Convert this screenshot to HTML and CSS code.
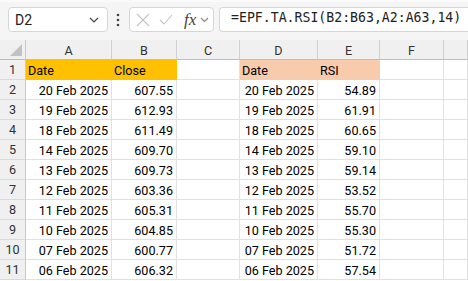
FILE: index.html
```html
<!DOCTYPE html>
<html>
<head>
  <title>RSI</title>
  <link rel="stylesheet" href="styles.css">
</head>
<body>

  <div class="toolbar">
    <div class="namebox">
      <span>D2</span>
      <svg class="chev" width="10" height="6" viewBox="0 0 10 6"><path d="M1 1 L5 5 L9 1" fill="none" stroke="#444" stroke-width="1.2"/></svg>
    </div>
    <svg class="dots" width="4" height="14" viewBox="0 0 4 14"><circle cx="2" cy="2" r="1.3" fill="#444"/><circle cx="2" cy="7" r="1.3" fill="#444"/><circle cx="2" cy="12" r="1.3" fill="#444"/></svg>
    <div class="fxbox">
      <svg width="14" height="14" viewBox="0 0 14 14"><path d="M1 1 L13 13 M13 1 L1 13" stroke="#c4c4c4" stroke-width="1.1"/></svg>
      <svg width="14" height="14" viewBox="0 0 14 14"><path d="M1 7 L5 11 L13 2" fill="none" stroke="#c4c4c4" stroke-width="1.1"/></svg>
      <span class="fx">fx</span>
      <svg width="9" height="6" viewBox="0 0 9 6"><path d="M1 1 L4.5 4.5 L8 1" fill="none" stroke="#888" stroke-width="1.1"/></svg>
    </div>
    <div class="formula">=EPF.TA.RSI(B2:B63,A2:A63,14)</div>
  </div>

  <div class="sheet" id="sheet"></div>

  <script>
    const dates = ["20 Feb 2025","19 Feb 2025","18 Feb 2025","14 Feb 2025","13 Feb 2025",
                   "12 Feb 2025","11 Feb 2025","10 Feb 2025","07 Feb 2025","06 Feb 2025"];
    const close = ["607.55","612.93","611.49","609.70","609.73","603.36","605.31","604.85","600.77","606.32"];
    const rsi = ["54.89","61.91","60.65","59.10","59.14","53.52","55.70","55.30","51.72","57.54"];

    const sheet = document.getElementById("sheet");
    let html = '<div class="corner"><span class="tri"></span></div>';
    ["A","B","C","D","E","F",""].forEach(c => { html += `<div class="colhead">${c}</div>`; });

    html += `<div class="rowhead">1</div>
      <div class="cell orange">Date</div><div class="cell orange">Close</div><div class="cell"></div>
      <div class="cell peach">Date</div><div class="cell peach">RSI</div><div class="cell"></div><div class="cell"></div>`;

    dates.forEach((d, i) => {
      html += `<div class="rowhead">${i + 2}</div>
        <div class="cell num">${d}</div><div class="cell num">${close[i]}</div><div class="cell"></div>
        <div class="cell num">${d}</div><div class="cell num">${rsi[i]}</div><div class="cell"></div><div class="cell"></div>`;
    });
    sheet.innerHTML = html;
  </script>

</body>
</html>
```

FILE: styles.css
```css
body {
  margin: 0;
  font-family: Roboto, "Liberation Sans", sans-serif;
  background: #fff;
  overflow: hidden;
}

.toolbar {
  height: 40px;
  box-sizing: border-box;
  background: #f5f5f5;
  border-top: 2px solid #fafafa;
  padding: 5px 0 0 8px;
  display: flex;
  align-items: flex-start;
}

.namebox {
  width: 100px;
  height: 25px;
  box-sizing: border-box;
  background: #fff;
  border: 1px solid #d6d6d6;
  border-radius: 4px;
  display: flex;
  align-items: center;
  justify-content: space-between;
  padding: 0 8px 0 6px;
  font-size: 14px;
  color: #222;
}

.dots {
  margin: 6px 9px 0 8px;
}

.fxbox {
  width: 85px;
  height: 25px;
  box-sizing: border-box;
  background: #fff;
  border: 1px solid #d6d6d6;
  border-radius: 4px;
  display: flex;
  align-items: center;
  gap: 9px;
  padding: 0 0 0 6px;
}

.fxbox svg + svg {
  margin-left: 0;
}

.fx {
  font-family: "Liberation Serif", serif;
  font-style: italic;
  font-size: 17px;
  color: #444;
  margin-left: 2px;
  margin-right: -5px;
}

.formula {
  margin-left: 5px;
  flex: 1;
  height: 25px;
  box-sizing: border-box;
  background: #fff;
  border: 1px solid #d6d6d6;
  border-right: none;
  border-radius: 4px 0 0 4px;
  padding: 2px 0 0 11px;
  font-family: "DejaVu Sans Mono", "Liberation Mono", monospace;
  font-size: 13.2px;
  color: #222;
  white-space: nowrap;
}

.sheet {
  display: grid;
  grid-template-columns: 26px 86px 65px 63px 78px 62px 64px 1fr;
  grid-auto-rows: 20px;
  font-size: 12.6px;
}

.corner, .colhead, .rowhead {
  background: #f0f0f0;
  color: #333;
  box-sizing: border-box;
  display: flex;
  align-items: center;
  justify-content: center;
}

.corner {
  border-right: 1px solid #c8c8c8;
  border-bottom: 1px solid #bdbdbd;
  position: relative;
}

.tri {
  position: absolute;
  right: 3px;
  bottom: 3px;
  width: 0;
  height: 0;
  border-left: 12px solid transparent;
  border-bottom: 12px solid #c2c2c2;
}

.colhead {
  border-bottom: 1px solid #bdbdbd;
  border-right: 1px solid #d0d0d0;
  padding-top: 1px;
}

.rowhead {
  border-right: 1px solid #c8c8c8;
  border-bottom: 1px solid #dadada;
}

.cell {
  box-sizing: border-box;
  border-right: 1px solid #e1e1e1;
  border-bottom: 1px solid #e1e1e1;
  padding: 1px 3px 0 2px;
  display: flex;
  align-items: center;
  color: #000;
  white-space: nowrap;
}

.num {
  justify-content: flex-end;
}

.orange {
  background: #ffc000;
  border-color: #ffc000;
}

.peach {
  background: #f8cbad;
  border-color: #f8cbad;
}
```
